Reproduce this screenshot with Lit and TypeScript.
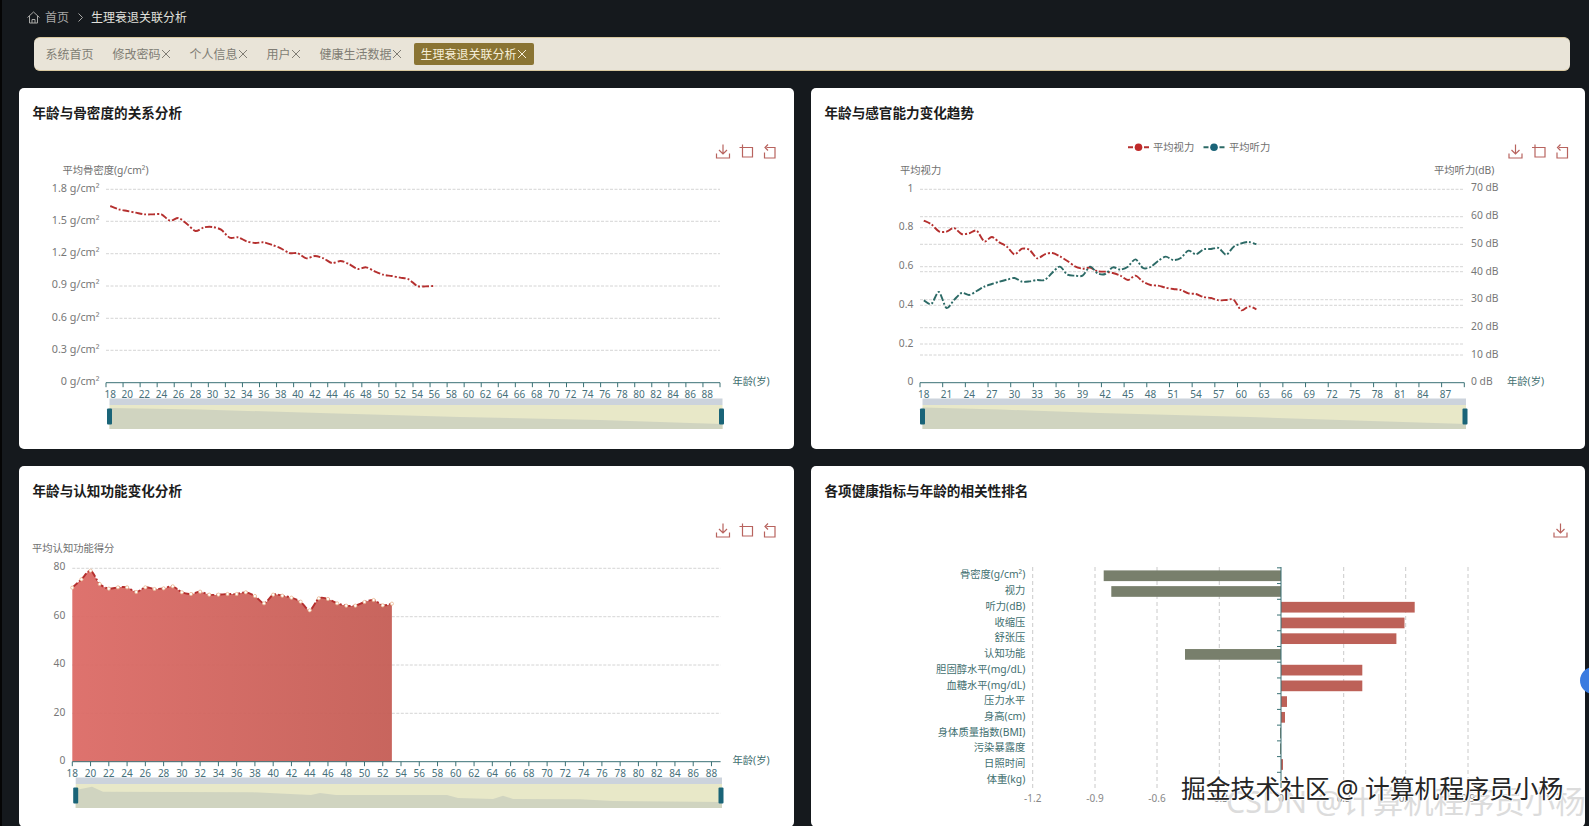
import { LitElement, css, html, svg } from 'lit'
import { customElement } from 'lit/decorators.js'

type Pt = [number, number]

// traced from the reference, in 1/3 px above the chart origin
const BONE = [228, 238, 243, 248, 253, 253, 253, 272, 264, 282, 303, 292, 291, 299, 323, 322, 334, 339, 337, 345, 355, 369, 370, 385, 378, 385, 399, 393, 402, 417, 412, 424, 434, 438, 443, 448, 468, 469, 468]
const VISION = [272, 283, 304, 305, 294, 312, 310, 302, 334, 321, 337, 350, 373, 356, 360, 385, 373, 369, 379, 393, 409, 416, 413, 424, 425, 429, 437, 450, 437, 455, 465, 467, 473, 477, 480, 490, 492, 501, 504, 511, 510, 509, 541, 529, 538]
const HEARING = [511, 522, 486, 534, 510, 489, 495, 483, 470, 462, 455, 449, 444, 455, 454, 450, 450, 428, 410, 434, 437, 437, 410, 430, 432, 412, 419, 410, 388, 414, 411, 393, 380, 390, 384, 362, 373, 358, 357, 354, 374, 350, 340, 336, 343]
const COGNITION = [263, 238, 212, 252, 266, 262, 262, 276, 262, 267, 265, 259, 277, 282, 275, 284, 284, 282, 282, 277, 288, 310, 284, 287, 293, 305, 331, 295, 297, 310, 317, 317, 306, 300, 316, 311]

const CORRELATION: [string, number][] = [
  ['骨密度(g/cm²)', 1103.7],
  ['视力', 1111.3],
  ['听力(dB)', 1414.7],
  ['收缩压', 1404.5],
  ['舒张压', 1396.4],
  ['认知功能', 1185],
  ['胆固醇水平(mg/dL)', 1362.3],
  ['血糖水平(mg/dL)', 1362.3],
  ['压力水平', 1287],
  ['身高(cm)', 1285],
  ['身体质量指数(BMI)', 1280],
  ['污染暴露度', 1280],
  ['日照时间', 1283],
  ['体重(kg)', 1281],
]

const TABS = ['修改密码', '个人信息', '用户', '健康生活数据']

function smooth(pts: Pt[]) {
  let d = `M${pts[0][0]} ${pts[0][1]}`
  for (let i = 0; i < pts.length - 1; i++) {
    const p0 = pts[Math.max(0, i - 1)]
    const p1 = pts[i]
    const p2 = pts[i + 1]
    const p3 = pts[Math.min(pts.length - 1, i + 2)]
    const k = 0.14
    d += `C${p1[0] + (p2[0] - p0[0]) * k} ${p1[1] + (p2[1] - p0[1]) * k} ${p2[0] - (p3[0] - p1[0]) * k} ${p2[1] - (p3[1] - p1[1]) * k} ${p2[0]} ${p2[1]}`
  }
  return d
}

function toolbox(x: number, y: number, only = false) {
  return svg`
    <g class="tool" transform="translate(${x} ${y})">
      <path d="M6.5 0v9.5M2.5 5.5l4 4 4-4M0 9v4.5h13V9" />
      ${only ? '' : svg`
        <path transform="translate(23 0)" d="M3 0v12.5h10V3H0" />
        <path transform="translate(46 0)" d="M4 3h8.5v10.5H2V8M5.5 0l-3 3 3 3" />
      `}
    </g>
  `
}

function slider(x0: number, x1: number, top: number, shape: Pt[]) {
  const bottom = top + 30.5
  const area = [[x0, bottom], ...shape, [x1, bottom]].map((p) => p.join(',')).join(' ')
  return svg`
    <rect x=${x0} y=${top} width=${x1 - x0} height="6.5" fill="#ccd3dc" />
    <rect x=${x0} y=${top + 6.5} width=${x1 - x0} height="24" fill="#e8e8c8" />
    <polygon points=${area} fill="#d0d4c0" />
    <rect class="handle" x=${x0 - 2.5} y=${top + 10} width="5" height="16" rx="1" />
    <rect class="handle" x=${x1 - 3.5} y=${top + 10} width="5" height="16" rx="1" />
  `
}

function xAxis(x0: number, x1: number, y: number, step: number, every: number, gap: boolean, nameX: number) {
  const marks = []
  for (let i = 0; i * step * every <= x1 - x0 + 0.1; i++) {
    const tx = x0 + i * every * step
    marks.push(svg`<line class="axis" x1=${tx} x2=${tx} y1=${y} y2=${y + 4.5} />`)
    const age = 18 + i * every
    if (age < 89) {
      marks.push(svg`<text class="xlab" x=${tx + (gap ? step / 2 : 0)} y=${y + 11}>${age}</text>`)
    }
  }
  return svg`
    <line class="axis" x1=${x0} x2=${x1} y1=${y} y2=${y} />
    ${marks}
    <text class="name teal" x=${nameX} y=${y - 1}>年龄(岁)</text>
  `
}

function chartOne() {
  const labels = ['1.8', '1.5', '1.2', '0.9', '0.6', '0.3', '0']
  const ys = [189.3, 221.3, 253.7, 286, 318.3, 350.3, 382.7]
  const step = 614 / 72
  const pts = BONE.map((v, i) => [106 + step * (i + 0.5), 130 + v / 3] as Pt)
  return svg`
    <svg class="chart" viewBox="19 138 775 310">
      ${toolbox(716.5, 144.5)}
      <text class="name" x="62.5" y="170">平均骨密度(g/cm²)</text>
      ${ys.map((y, i) => svg`
        ${i < 6 ? svg`<line class="grid" x1="106" x2="720" y1=${y} y2=${y} />` : ''}
        <text class="ylab wide" x="99.5" y=${y - 1.5}>${labels[i]} g/cm²</text>
      `)}
      <path class="line red" d=${smooth(pts)} />
      ${xAxis(106, 720, 382.7, step, 2, true, 732.5)}
      ${slider(109.5, 722.5, 398.5, [[109.5, 408], [200, 409.5], [320, 413], [460, 417], [600, 420], [690, 423], [722.5, 424]])}
    </svg>
  `
}

function chartTwo() {
  const grid = [189.3, 216.7, 227.7, 244.3, 266.7, 271.7, 299.7, 305.3, 327.7, 344, 355]
  const left: [string, number][] = [['1', 188], ['0.8', 226.7], ['0.6', 265], ['0.4', 304], ['0.2', 343], ['0', 381.7]]
  const right: [string, number][] = [['70', 187.7], ['60', 215.7], ['50', 243.3], ['40', 271.3], ['30', 298.7], ['20', 326.3], ['10', 354], ['0', 381.7]]
  const step = 544.3 / 72
  const line = (data: number[]) => data.map((v, i) => [920 + step * (i + 0.5), 130 + v / 3] as Pt)
  return svg`
    <svg class="chart" viewBox="811 138 774 310">
      <line class="legend red" x1="1128" x2="1149" y1="147.3" y2="147.3" />
      <circle cx="1138.5" cy="147.3" r="3.8" fill="#c02a2a" />
      <text class="name" x="1153" y="147">平均视力</text>
      <line class="legend tealline" x1="1203.5" x2="1225" y1="147.3" y2="147.3" />
      <circle cx="1214" cy="147.3" r="3.8" fill="#1a6478" />
      <text class="name" x="1229" y="147">平均听力</text>
      ${toolbox(1509, 144.5)}
      <text class="name" x="900" y="170">平均视力</text>
      <text class="name" x="1434" y="170">平均听力(dB)</text>
      ${grid.map((y) => svg`<line class="grid" x1="920" x2="1464.3" y1=${y} y2=${y} />`)}
      ${left.map(([t, y]) => svg`<text class="ylab" x="913.3" y=${y}>${t}</text>`)}
      ${right.map(([t, y]) => svg`<text class="ylab start" x="1471" y=${y}>${t} dB</text>`)}
      <path class="line red" d=${smooth(line(VISION))} />
      <path class="line tealline" d=${smooth(line(HEARING))} />
      ${xAxis(920, 1464.3, 382.7, step, 3, true, 1507)}
      ${slider(922.5, 1466, 398.5, [[922.5, 407.5], [1000, 409.5], [1100, 413], [1250, 417], [1340, 420], [1466, 424]])}
    </svg>
  `
}

function chartThree() {
  const step = 648.3 / 71
  const pts = COGNITION.map((v, i) => [72.3 + step * i, 500 + v / 3] as Pt)
  const last = pts[pts.length - 1][0]
  const area = `${smooth(pts)}L${last} 761.7L72.3 761.7Z`
  const labels: [string, number][] = [['80', 566.5], ['60', 615], ['40', 663.5], ['20', 712], ['0', 760.5]]
  return svg`
    <svg class="chart" viewBox="19 516 775 310">
      <defs>
        <linearGradient id="red" x1="0" x2="1" y1="0" y2="0">
          <stop offset="0" stop-color="#dc6b66" />
          <stop offset="1" stop-color="#c55d55" />
        </linearGradient>
      </defs>
      ${toolbox(716.5, 523.5)}
      <text class="name" x="32" y="548.7">平均认知功能得分</text>
      ${[568.3, 616.7, 665, 713.3].map((y) => svg`<line class="grid" x1="72.3" x2="720.5" y1=${y} y2=${y} />`)}
      ${labels.map(([t, y]) => svg`<text class="ylab" x="65.3" y=${y}>${t}</text>`)}
      <path d=${area} fill="url(#red)" fill-opacity="0.95" />
      <path class="line red" d=${smooth(pts)} />
      ${pts.map(([x, y]) => svg`<circle class="dot" cx=${x} cy=${y} r="1.6" />`)}
      ${xAxis(72.3, 720.6, 761.7, step, 2, false, 732.5)}
      ${slider(75.7, 722, 777.5, [[75.7, 790], [92, 786.7], [103, 791.7], [253, 792.3], [311, 795], [320, 793], [336, 795], [447, 795], [458, 798], [493, 799], [503, 795.7], [513, 799], [580, 799.3], [613, 801], [722, 802]])}
    </svg>
  `
}

function chartFour() {
  const zero = 1281
  const xs: [string, number][] = [['-1.2', 1032.7], ['-0.9', 1095], ['-0.6', 1157], ['-0.3', 1219.3], ['0.3', 1343.7], ['0.6', 1405.7], ['0.9', 1468]]
  const rowH = 15.73
  return svg`
    <svg class="chart" viewBox="811 516 774 310">
      ${toolbox(1554, 523.5, true)}
      ${xs.map(([t, x]) => svg`
        <line class="vgrid" x1=${x} x2=${x} y1="567" y2="788" />
        <text class="xlab gray" x=${x} y="798">${t}</text>
      `)}
      <text class="xlab gray" x=${zero} y="798">0</text>
      ${CORRELATION.map(([name, end], i) => {
        const cy = 575.7 + rowH * i
        const neg = end < zero
        return svg`
          <text class="ylab tealtext" x="1025.3" y=${cy - 1}>${name}</text>
          <line class="axis" x1=${zero - 4} x2=${zero} y1=${cy - rowH / 2} y2=${cy - rowH / 2} />
          <rect x=${Math.min(end, zero)} y=${cy - 5.3} width=${Math.abs(end - zero)} height="10.7" fill=${neg ? '#787f6c' : '#bd6158'} />
        `
      })}
      <line class="axis" x1=${zero} x2=${zero} y1="567" y2="788" />
    </svg>
  `
}

@customElement('app-root')
export class AppRoot extends LitElement {
  static styles = css`
    :host {
      display: block;
      height: 826px;
      overflow: hidden;
      position: relative;
      background: #15191d;
      box-shadow: inset 2px 0 0 #050505;
      font-family: 'Noto Sans', 'Noto Sans CJK SC', sans-serif;
    }
    .crumbs {
      display: flex;
      align-items: center;
      height: 34px;
      padding-left: 27px;
      font-size: 12px;
      color: #a8a8a6;
    }
    .crumbs svg {
      width: 13px;
      height: 13px;
      margin-right: 5px;
      fill: none;
      stroke: #a8a8a6;
      stroke-width: 1;
    }
    .crumbs .sep {
      margin: 0 8px 0 9px;
      width: 5px;
      height: 9px;
    }
    .crumbs b {
      font-weight: 400;
      color: #e0e0dc;
    }
    .tabs {
      display: flex;
      align-items: center;
      gap: 5px;
      height: 34px;
      box-sizing: border-box;
      margin: 3px 19px 0 34px;
      padding-left: 4.5px;
      background: #e9e4d8;
      border: solid #d8c8a0;
      border-width: 1px 0;
      border-radius: 6px;
      font-size: 12px;
      color: #807d74;
    }
    .tab {
      display: flex;
      align-items: center;
      height: 22px;
      padding: 0 7px;
    }
    .tab svg {
      width: 10px;
      height: 10px;
      stroke: currentColor;
      stroke-width: 1;
    }
    .tab.on {
      background: #8a7433;
      color: #f6efd9;
      border-radius: 2px;
    }
    .cards {
      display: grid;
      grid-template-columns: 775px 774px;
      grid-auto-rows: 361px;
      gap: 17px 17px;
      margin: 17px 0 0 19px;
    }
    .card {
      background: #fff;
      border-radius: 5px;
      overflow: hidden;
    }
    .card h3 {
      margin: 0;
      height: 50px;
      line-height: 49px;
      padding-left: 13.5px;
      font-size: 13.6px;
      font-weight: 700;
      color: #1c1c1c;
    }
    .chart {
      display: block;
      width: 100%;
      height: 310px;
    }
    text {
      font-size: 10.3px;
      dominant-baseline: middle;
      transform: translateY(1px);
    }
    .grid {
      stroke: #c9c9c9;
      stroke-width: 0.8;
      stroke-dasharray: 3 1.5;
    }
    .vgrid {
      stroke: #bdbdbd;
      stroke-width: 0.8;
      stroke-dasharray: 4 3;
    }
    .axis {
      stroke: #3a7175;
      stroke-width: 1;
    }
    .name {
      fill: #6f6f6f;
    }
    .teal {
      fill: #3f6f70;
    }
    .ylab {
      fill: #777;
      text-anchor: end;
    }
    .ylab.wide {
      font-size: 10.8px;
    }
    .ylab.start {
      text-anchor: start;
    }
    .ylab.tealtext {
      fill: #3f6f70;
    }
    .xlab {
      fill: #47707a;
      text-anchor: middle;
      font-size: 10px;
      transform: translateY(1.5px);
    }
    .xlab.gray {
      fill: #888;
    }
    .line {
      fill: none;
      stroke-width: 1.9;
      stroke-dasharray: 7 2 2 2;
    }
    .legend {
      stroke-width: 2;
      stroke-dasharray: 5 2.5 6 2.5 5;
    }
    .red {
      stroke: #b5302f;
    }
    .tealline {
      stroke: #2c6a66;
    }
    .dot {
      fill: #fff;
      stroke: #e8b58f;
      stroke-width: 0.8;
    }
    .handle {
      fill: #1a6478;
    }
    .tool {
      fill: none;
      stroke: #b8635e;
      stroke-width: 1.2;
    }
    .blob {
      position: absolute;
      top: 667px;
      left: 1580px;
      width: 27px;
      height: 27px;
      border-radius: 50%;
      background: #3b7ce0;
    }
    .mark {
      position: absolute;
      white-space: nowrap;
      line-height: 1;
    }
    .mark.back {
      top: 787px;
      left: 1226px;
      font-size: 30.4px;
      color: #dcdcdc;
    }
    .mark.front {
      top: 775.5px;
      left: 1181px;
      font-size: 24.8px;
      color: #262626;
      text-shadow: 1px 1px 0 #fff, -1px 0 0 #fff, 0 -1px 0 #fff;
    }
  `

  render() {
    return html`
      <div class="crumbs">
        <svg viewBox="0 0 13 13"><path d="M0.5 6.5L6.5 1l6 5.5M2.5 5v7h8V5M5 12V8.5h3V12" /></svg>
        首页
        <svg class="sep" viewBox="0 0 5 9"><path d="M0.5 0.5l4 4-4 4" /></svg>
        <b>生理衰退关联分析</b>
      </div>
      <div class="tabs">
        <span class="tab">系统首页</span>
        ${TABS.map((t) => html`<span class="tab">${t}${this.closeIcon()}</span>`)}
        <span class="tab on">生理衰退关联分析${this.closeIcon()}</span>
      </div>
      <div class="cards">
        <section class="card"><h3>年龄与骨密度的关系分析</h3>${chartOne()}</section>
        <section class="card"><h3>年龄与感官能力变化趋势</h3>${chartTwo()}</section>
        <section class="card"><h3>年龄与认知功能变化分析</h3>${chartThree()}</section>
        <section class="card"><h3>各项健康指标与年龄的相关性排名</h3>${chartFour()}</section>
      </div>
      <div class="blob"></div>
      <div class="mark back">CSDN @计算机程序员小杨</div>
      <div class="mark front">掘金技术社区 @ 计算机程序员小杨</div>
    `
  }

  closeIcon() {
    return html`<svg viewBox="0 0 10 10"><path d="M1 1l8 8M9 1l-8 8" /></svg>`
  }
}
